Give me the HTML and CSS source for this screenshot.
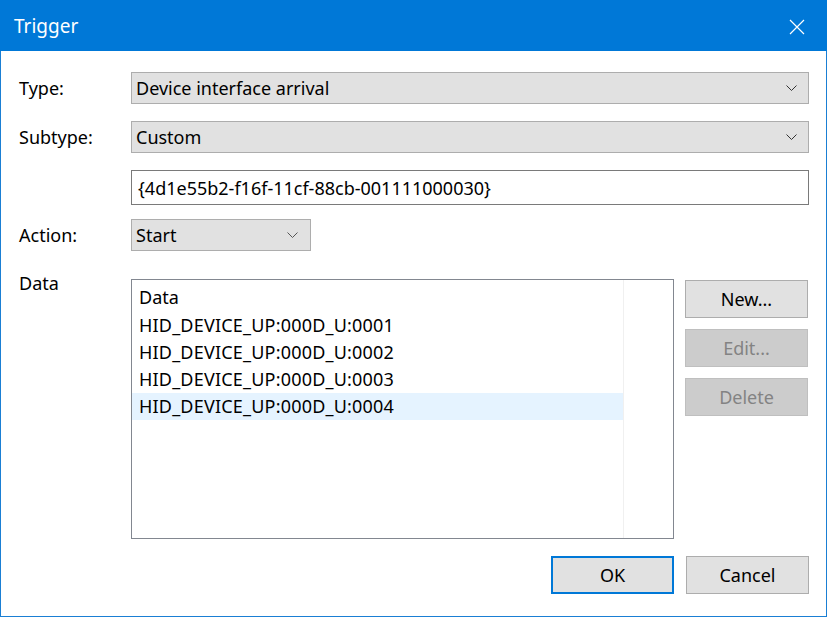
FILE: index.html
```html
<!DOCTYPE html>
<html>
<head>
<meta charset="utf-8">
<link rel="stylesheet" href="styles.css">
</head>
<body>
<div class="window">
  <div class="titlebar">
    <span class="title">Trigger</span>
    <svg class="close" width="16" height="16" viewBox="0 0 16 16"><path d="M1 1 L15 15 M15 1 L1 15" stroke="#fff" stroke-width="1.2" fill="none"/></svg>
  </div>
  <div class="content">
    <div class="row r-type">
      <div class="label">Type:</div>
      <div class="combo wide"><span>Device interface arrival</span><svg class="chev" width="11" height="6" viewBox="0 0 11 6"><path d="M0.5 0.5 L5.5 5.5 L10.5 0.5" stroke="#333" stroke-width="1" fill="none"/></svg></div>
    </div>
    <div class="row r-sub">
      <div class="label">Subtype:</div>
      <div class="combo wide"><span>Custom</span><svg class="chev" width="11" height="6" viewBox="0 0 11 6"><path d="M0.5 0.5 L5.5 5.5 L10.5 0.5" stroke="#333" stroke-width="1" fill="none"/></svg></div>
    </div>
    <div class="row r-guid">
      <div class="label"></div>
      <div class="input">{4d1e55b2-f16f-11cf-88cb-001111000030}</div>
    </div>
    <div class="row r-action">
      <div class="label">Action:</div>
      <div class="combo short"><span>Start</span><svg class="chev" width="11" height="6" viewBox="0 0 11 6"><path d="M0.5 0.5 L5.5 5.5 L10.5 0.5" stroke="#555" stroke-width="1" fill="none"/></svg></div>
    </div>
    <div class="row r-data">
      <div class="label data-label">Data</div>
      <div class="list">
        <div class="list-col">
          <div class="item header">Data</div>
          <div class="item">HID_DEVICE_UP:000D_U:0001</div>
          <div class="item">HID_DEVICE_UP:000D_U:0002</div>
          <div class="item">HID_DEVICE_UP:000D_U:0003</div>
          <div class="item selected">HID_DEVICE_UP:000D_U:0004</div>
        </div>
        <div class="list-rest"></div>
      </div>
      <div class="side-buttons">
        <div class="btn">New...</div>
        <div class="btn disabled">Edit...</div>
        <div class="btn disabled">Delete</div>
      </div>
    </div>
    <div class="footer">
      <div class="btn default">OK</div>
      <div class="btn">Cancel</div>
    </div>
  </div>
</div>
</body>
</html>
```
FILE: styles.css
```css
html, body {
  margin: 0;
  padding: 0;
  background: #fff;
}
body {
  font-family: "Noto Sans", "Open Sans", sans-serif;
  font-size: 18px;
  color: #000;
}
.window {
  width: 827px;
  height: 617px;
  box-sizing: border-box;
  border: 1px solid #1a7fd4;
  border-top: none;
  display: flex;
  flex-direction: column;
  background: #fff;
}
.titlebar {
  height: 51px;
  margin: 0 -1px;
  background: #0078d7;
  color: #fff;
  display: flex;
  align-items: center;
  justify-content: space-between;
  padding: 0 22px 0 14px;
  flex-shrink: 0;
}
.title {
  font-size: 19px;
  margin-top: 1px;
}
.close {
  margin-top: 2px;
}
.content {
  display: flex;
  flex-direction: column;
  padding: 0 17px 0 18px;
}
.row {
  display: flex;
  align-items: center;
}
.label {
  width: 112px;
  flex-shrink: 0;
}
.r-type { margin-top: 21px; }
.r-sub { margin-top: 17px; }
.r-guid { margin-top: 17px; }
.r-action { margin-top: 14px; }
.r-data { margin-top: 28px; align-items: flex-start; }
.combo {
  height: 32px;
  box-sizing: border-box;
  background: #e1e1e1;
  border: 1px solid #adadad;
  display: flex;
  align-items: center;
  justify-content: space-between;
  padding: 0 11px 0 4px;
}
.combo.wide { flex: 1; }
.combo.short { width: 180px; padding-right: 12px; }
.chev { flex-shrink: 0; }
.input {
  flex: 1;
  height: 35px;
  box-sizing: border-box;
  border: 1px solid #7a7a7a;
  display: flex;
  align-items: center;
  padding: 0 6px;
  background: #fff;
}
.data-label {
  margin-top: -8px;
}
.list {
  width: 543px;
  height: 260px;
  box-sizing: border-box;
  border: 1px solid #828790;
  display: flex;
}
.list-col {
  width: 491px;
  border-right: 1px solid #f0f0f0;
  padding-top: 4px;
}
.list-rest { flex: 1; }
.item {
  height: 27px;
  line-height: 27px;
  padding-left: 7px;
  white-space: nowrap;
  letter-spacing: 0.2px;
}
.item.header {
  height: 28px;
  line-height: 27px;
  letter-spacing: 0;
}
.item.selected {
  background: #e5f3ff;
}
.side-buttons {
  margin-left: 11px;
  display: flex;
  flex-direction: column;
  gap: 11px;
  margin-top: 1px;
}
.btn {
  width: 123px;
  height: 38px;
  box-sizing: border-box;
  background: #e1e1e1;
  border: 1px solid #adadad;
  display: flex;
  align-items: center;
  justify-content: center;
}
.btn.disabled {
  background: #cccccc;
  border-color: #bfbfbf;
  color: #838383;
}
.btn.default {
  border: 2px solid #0078d7;
}
.footer {
  display: flex;
  justify-content: flex-end;
  gap: 12px;
  margin-top: 17px;
}
```
